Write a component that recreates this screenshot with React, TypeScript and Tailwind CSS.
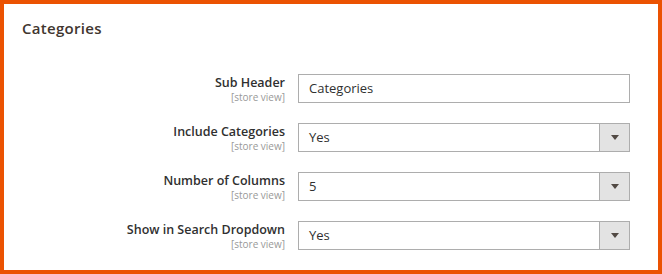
const rows = [
  { label: 'Sub Header', value: 'Categories', select: false },
  { label: 'Include Categories', value: 'Yes', select: true },
  { label: 'Number of Columns', value: '5', select: true },
  { label: 'Show in Search Dropdown', value: 'Yes', select: true },
];

function Field({ value, select }: { value: string; select: boolean }) {
  return (
    <div className="flex h-[29px] w-[332px] items-stretch border border-[#adadad] bg-white">
      <span className="flex flex-1 items-center pl-[10px] text-[13px] text-[#303030]">{value}</span>
      {select && (
        <span className="flex w-[30px] items-center justify-center border-l border-[#adadad] bg-[#e3e3e3]">
          <svg width="8" height="5" viewBox="0 0 8 5">
            <path d="M0 0h8L4 5z" fill="#514943" />
          </svg>
        </span>
      )}
    </div>
  );
}

export default function App() {
  return (
    <div
      className="h-[274px] w-[662px] border-4 border-[#eb5202] bg-white"
      style={{ fontFamily: '"Open Sans", "Liberation Sans", sans-serif' }}
    >
      <h2 className="px-[18px] pt-[14px] text-[15px] font-semibold leading-[20px] tracking-[0.3px] text-[#41362f]">
        Categories
      </h2>
      <div className="mt-[36px] flex flex-col gap-[20px]">
        {rows.map((r) => (
          <div key={r.label} className="flex items-start gap-[13px]">
            <div className="flex w-[281px] flex-col items-end pt-[1px]">
              <span className="text-[12.5px] font-semibold leading-[16px] text-[#303030]">{r.label}</span>
              <span className="text-[10px] leading-[12px] text-[#999]">[store view]</span>
            </div>
            <Field value={r.value} select={r.select} />
          </div>
        ))}
      </div>
    </div>
  );
}
